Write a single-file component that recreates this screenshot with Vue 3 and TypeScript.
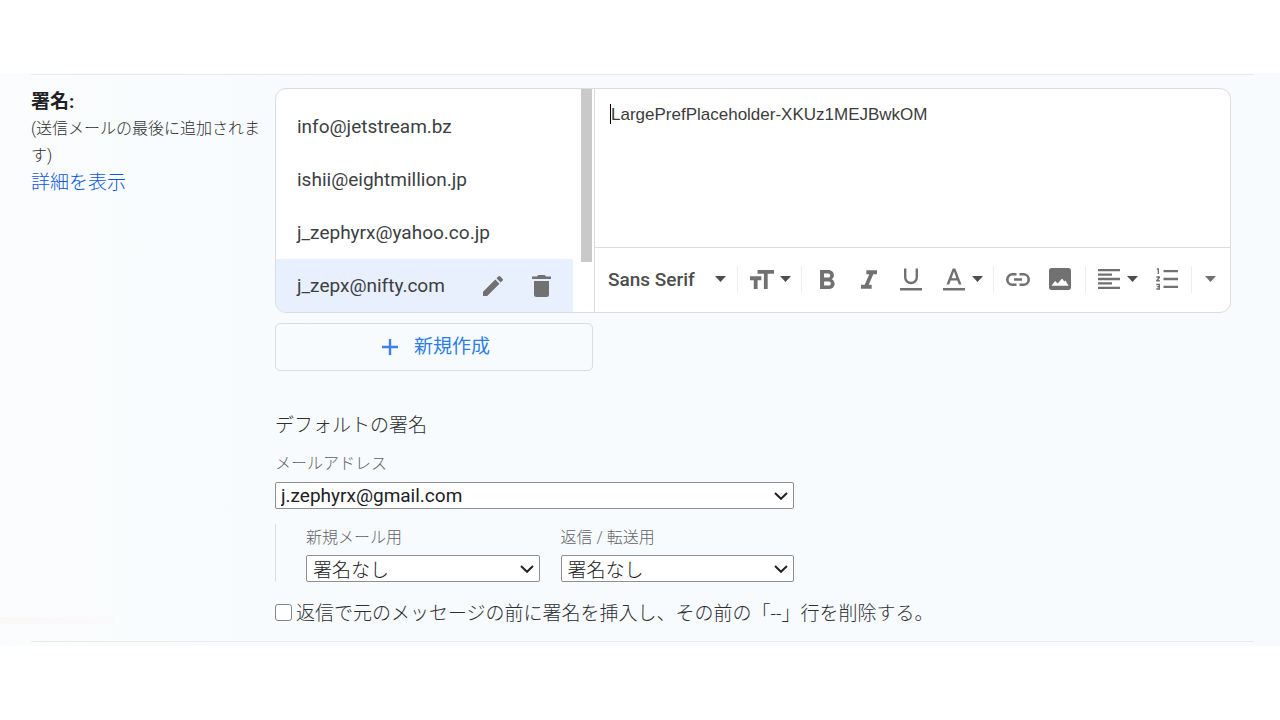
<script setup lang="ts">
import { ref } from 'vue'

const signatures = ['info@jetstream.bz', 'ishii@eightmillion.jp', 'j_zephyrx@yahoo.co.jp', 'j_zepx@nifty.com']
const selected = ref(3)
const address = ref('j.zephyrx@gmail.com')
const forNew = ref('署名なし')
const forReply = ref('署名なし')
const insertBefore = ref(false)
</script>

<template>
  <main class="page">
    <section class="settings">
      <div class="row">
        <div class="caption">
          <h2>署名:</h2>
          <p>(送信メールの最後に追加されます)</p>
          <a href="#">詳細を表示</a>
        </div>

        <div class="content">
          <div class="editor">
            <div class="list-pane">
              <ul class="list">
                <li v-for="(name, i) in signatures" :key="name" :class="{ active: i === selected }">
                  <button type="button" class="name" @click="selected = i">{{ name }}</button>
                  <template v-if="i === selected">
                    <button type="button" class="act" aria-label="編集">
                      <svg width="20" height="20" viewBox="3 3 18 18"><path d="M3 17.250V21h3.750L17.810 9.940l-3.750-3.750L3 17.250zM20.710 7.040a1 1 0 0 0 0-1.410l-2.340-2.340a1 1 0 0 0-1.410 0l-1.830 1.830 3.750 3.750 1.830-1.830z" /></svg>
                    </button>
                    <button type="button" class="act" aria-label="削除">
                      <svg width="19" height="22" viewBox="0 0 19 22"><path d="M2 6h15v13.500a2.500 2.500 0 0 1-2.500 2.500h-10a2.500 2.500 0 0 1-2.500-2.500zM0 1.500h5L6.200 0h6.600L14 1.500h5V4H0z" /></svg>
                    </button>
                  </template>
                </li>
              </ul>
              <div class="track"><div class="thumb"></div></div>
            </div>

            <div class="compose">
              <div class="body" contenteditable="true" role="textbox" aria-label="署名"><span class="caret"></span>LargePrefPlaceholder-XKUz1MEJBwkOM</div>
              <div class="toolbar">
                <div class="group font">
                  <button type="button" class="font-button">Sans Serif
                    <svg class="arrow" width="11" height="6" viewBox="0 0 11 6"><path d="M0 0h11L5.500 6z" /></svg>
                  </button>
                </div>
                <div class="group">
                  <button type="button" class="pair" aria-label="サイズ">
                    <svg width="24" height="19" viewBox="3 4 19 15"><path d="M9 4v3h5v12h3V7h5V4H9zm-6 8h3v7h3v-7h3V9H3v3z" /></svg>
                    <svg class="arrow" width="11" height="6" viewBox="0 0 11 6"><path d="M0 0h11L5.500 6z" /></svg>
                  </button>
                </div>
                <div class="group tools">
                  <button type="button" class="tool" aria-label="太字">
                    <svg width="15" height="19" viewBox="7 4 11 14"><path d="M15.600 10.790c.970-.670 1.650-1.770 1.650-2.790 0-2.260-1.750-4-4-4H7v14h7.040c2.090 0 3.710-1.700 3.710-3.790 0-1.520-.860-2.820-2.150-3.420zM10 6.500h3c.830 0 1.500.670 1.500 1.500s-.670 1.500-1.500 1.500h-3v-3zm3.500 9H10v-3h3.500c.830 0 1.500.670 1.500 1.500s-.670 1.500-1.500 1.500z" /></svg>
                  </button>
                  <button type="button" class="tool" aria-label="斜体">
                    <svg width="16" height="19" viewBox="6 4 12 14"><path d="M10 4v3h2.210l-3.420 8H6v3h8v-3h-2.210l3.420-8H18V4z" /></svg>
                  </button>
                  <button type="button" class="tool" aria-label="下線">
                    <svg width="22" height="24" viewBox="0 0 22 24"><path d="M5.200 1.500v8.700a5.800 5.800 0 0 0 11.600 0V1.500" fill="none" stroke="#717171" stroke-width="2.400" /><path d="M0 21h22v2.500H0z" /></svg>
                  </button>
                  <button type="button" class="pair" aria-label="テキストの色">
                    <svg width="22" height="24" viewBox="0 0 22 24"><path fill-rule="evenodd" d="M9.700 1.500h2.600l6.200 16h-2.700l-1.500-4H7.700l-1.500 4H3.500zM8.600 11.200h4.800L11 4.600zM0 21h22v2.500H0z" /></svg>
                    <svg class="arrow" width="11" height="6" viewBox="0 0 11 6"><path d="M0 0h11L5.500 6z" /></svg>
                  </button>
                </div>
                <div class="group links">
                  <button type="button" class="tool" aria-label="リンク">
                    <svg width="24" height="13" viewBox="0 0 24 13"><path d="M10.500 1.300H6.500a5.200 5.200 0 0 0 0 10.400h4M13.500 1.300h4a5.200 5.200 0 0 1 0 10.400h-4M8 6.500h8" fill="none" stroke="#717171" stroke-width="2.600" /></svg>
                  </button>
                  <button type="button" class="tool" aria-label="画像を挿入">
                    <svg width="22" height="22" viewBox="3 3 18 18"><path d="M21 19V5c0-1.100-.900-2-2-2H5c-1.100 0-2 .900-2 2v14c0 1.100.900 2 2 2h14c1.100 0 2-.900 2-2zM5 17.500l3-3.800 2.100 1.900 3.600-4 1.800 2.400 1-.8 2.500 4.300z" /></svg>
                  </button>
                </div>
                <div class="group align">
                  <button type="button" class="pair" aria-label="配置">
                    <svg width="22" height="20" viewBox="0 0 22 20"><path d="M0 0h22v2.300H0zM0 4.400h14v2.300H0zM0 8.800h22v2.400H0zM0 13.300h14v2.300H0zM0 17.700h22V20H0z" /></svg>
                    <svg class="arrow" width="11" height="6" viewBox="0 0 11 6"><path d="M0 0h11L5.500 6z" /></svg>
                  </button>
                  <button type="button" class="tool" aria-label="番号付きリスト">
                    <svg width="22" height="22" viewBox="0 0 22 22"><path d="M7.500 2H22v2.300H7.500zM7.500 9.800H22v2.400H7.500zM7.500 17.700H22V20H7.500z" /><path d="M.8 1h1.500v5M.3 9h3v.5L.8 12.700h3M.3 16.500h3v4.500h-3M1.300 18.700h2" fill="none" stroke="#717171" stroke-width="1.400" /></svg>
                  </button>
                </div>
                <button type="button" class="more" aria-label="その他">
                  <svg width="11" height="6" viewBox="0 0 11 6"><path d="M0 0h11L5.500 6z" /></svg>
                </button>
              </div>
            </div>
          </div>

          <button type="button" class="create">
            <svg width="16" height="16" viewBox="0 0 16 16"><path d="M6.800 0h2.400v6.800H16v2.400H9.200V16H6.800V9.200H0V6.800h6.800z" /></svg>
            <span>新規作成</span>
          </button>

          <div class="defaults">
            <h3>デフォルトの署名</h3>
            <label class="hint" for="address">メールアドレス</label>
            <div class="select">
              <select id="address" v-model="address"><option>j.zephyrx@gmail.com</option></select>
              <svg width="14" height="8" viewBox="0 0 14 8"><path d="M1 1l6 5.800L13 1" /></svg>
            </div>
            <div class="usage">
              <div class="field">
                <label class="hint" for="for-new">新規メール用</label>
                <div class="select">
                  <select id="for-new" v-model="forNew"><option>署名なし</option></select>
                  <svg width="14" height="8" viewBox="0 0 14 8"><path d="M1 1l6 5.800L13 1" /></svg>
                </div>
              </div>
              <div class="field">
                <label class="hint" for="for-reply">返信 / 転送用</label>
                <div class="select">
                  <select id="for-reply" v-model="forReply"><option>署名なし</option></select>
                  <svg width="14" height="8" viewBox="0 0 14 8"><path d="M1 1l6 5.800L13 1" /></svg>
                </div>
              </div>
            </div>
          </div>

          <label class="check">
            <input v-model="insertBefore" type="checkbox" />
            <span>返信で元のメッセージの前に署名を挿入し、その前の「--」行を削除する。</span>
          </label>
        </div>
      </div>
    </section>
  </main>
</template>

<style>
body {
  margin: 0;
  background: #fff;
}
</style>

<style scoped>
* {
  box-sizing: border-box;
}
.page {
  padding: 73px 0;
  font-family: Roboto, "Noto Sans CJK JP", sans-serif;
  font-size: 19px;
  font-weight: 300;
  color: #2c2f32;
}
button {
  padding: 0;
  border: 0;
  background: none;
  font: inherit;
  color: inherit;
  cursor: pointer;
}
svg {
  display: block;
  flex: none;
  fill: #717171;
}
h2,
h3,
p,
ul {
  margin: 0;
  padding: 0;
}
.settings {
  padding: 1px 26px 4px 31px;
  background:
    linear-gradient(90deg, #faf7f7, #fbf9f9) 0 544px / 114px 7px no-repeat,
    linear-gradient(90deg, #fafcfd, #f8fbfe 25%, #f8fbfe);
}
.row {
  display: grid;
  grid-template-columns: 244px minmax(0, 1fr);
  padding: 13px 23px 14px 0;
  border-top: 1px solid #e6ebeb;
  border-bottom: 1px solid #e6ebeb;
}
.caption {
  padding-top: 1px;
  line-height: 27px;
}
h2 {
  font-size: 19px;
  font-weight: 700;
  line-height: 26px;
  color: #202124;
}
p {
  width: 238px;
  font-size: 16px;
}
a {
  color: #0b57e0;
  text-decoration: none;
  line-height: 26px;
}
.editor {
  display: flex;
  height: 225px;
  border: 1px solid #dadce0;
  border-radius: 11px;
  background: #fff;
  overflow: hidden;
}
.list-pane {
  display: flex;
  justify-content: space-between;
  width: 319px;
  padding-right: 2px;
  border-right: 1px solid #dadce0;
}
.list {
  width: 297px;
  padding-top: 11px;
  list-style: none;
}
li {
  display: flex;
  align-items: center;
  height: 53px;
  padding-left: 21px;
  padding-right: 20px;
  font-weight: 400;
  color: #3c4043;
}
li.active {
  background: #e8effd;
}
.name {
  flex: 1;
  text-align: left;
}
.act {
  display: flex;
  justify-content: center;
  width: 24px;
  margin-left: 24px;
}
.track {
  width: 11px;
}
.thumb {
  height: 173px;
  background: #c9c9c9;
}
.compose {
  flex: 1;
  min-width: 0;
  display: flex;
  flex-direction: column;
}
.body {
  flex: 1;
  display: flex;
  align-items: flex-start;
  padding: 15px;
  font: 400 17px/21px "Liberation Sans", Arial, sans-serif;
  color: #3c3c3c;
  outline: 0;
}
.caret {
  width: 1px;
  height: 20px;
  background: #000;
}
.toolbar {
  display: flex;
  align-items: center;
  height: 65px;
  padding-left: 13px;
  padding-bottom: 2px;
  border-top: 1px solid #dadce0;
}
.group {
  display: flex;
  align-items: center;
  height: 27px;
  border-right: 1px solid #eee;
}
.font {
  width: 130px;
  padding-right: 11px;
}
.font-button {
  display: flex;
  flex: 1;
  align-items: center;
  justify-content: space-between;
  font-size: 19px;
  font-weight: 500;
  color: #4d4d4d;
}
.arrow {
  fill: #4d4d4d;
}
.pair {
  display: flex;
  align-items: center;
  gap: 6px;
  padding: 0 10px 0 12px;
}
.tools {
  padding-left: 4px;
}
.tools .pair {
  gap: 7px;
  padding-left: 11px;
}
.links {
  padding-left: 3px;
  padding-right: 4px;
}
.align {
  padding-right: 3px;
}
.align .pair {
  gap: 7px;
  padding-right: 8px;
}
.tool {
  display: flex;
  align-items: center;
  justify-content: center;
  width: 42px;
}
.more {
  padding: 8px 13px;
}
.create {
  display: flex;
  align-items: center;
  justify-content: center;
  gap: 16px;
  width: 318px;
  height: 48px;
  margin-top: 10px;
  padding-left: 4px;
  border: 1px solid #dadce0;
  border-radius: 5px;
  font-weight: 400;
  color: #2b7de9;
}
.create svg {
  fill: #3b82f0;
}
.create span {
  padding-bottom: 5px;
}
.defaults {
  width: 519px;
  margin-top: 41px;
}
h3 {
  font-size: 19px;
  font-weight: 300;
  line-height: 28px;
}
.hint {
  display: block;
  font-size: 16px;
  line-height: 24px;
  color: #5f6368;
}
.defaults > .hint {
  margin: 12px 0 6px;
}
.select {
  display: grid;
  align-items: center;
}
.select > * {
  grid-area: 1 / 1;
}
.select svg {
  justify-self: end;
  margin-right: 6px;
  fill: none;
  stroke: #222;
  stroke-width: 2;
  pointer-events: none;
}
select {
  width: 100%;
  height: 27px;
  padding: 0 24px 0 5px;
  border: 1px solid #8f8f8f;
  border-radius: 2px;
  background: #fff;
  appearance: none;
  font: 400 19px/24px Roboto, "Noto Sans CJK JP", sans-serif;
  color: #202124;
}
.field select {
  padding-top: 3px;
  padding-left: 6px;
  font-weight: 300;
}
.usage {
  display: grid;
  grid-template-columns: 1fr 1fr;
  gap: 21px;
  margin-top: 15px;
  padding-left: 30px;
  border-left: 1px solid #dadce0;
}
.field .hint {
  padding-top: 2px;
  margin-bottom: 5px;
}
.check {
  display: flex;
  align-items: center;
  gap: 4px;
  margin-top: 15px;
  line-height: 27px;
}
.check span {
  padding-top: 3px;
}
.check input {
  appearance: none;
  flex: none;
  width: 17px;
  height: 17px;
  margin: 0;
  border: 1px solid #858585;
  border-radius: 3px;
  background: #fff;
}
.check input:checked {
  background: #1a73e8;
}
</style>
